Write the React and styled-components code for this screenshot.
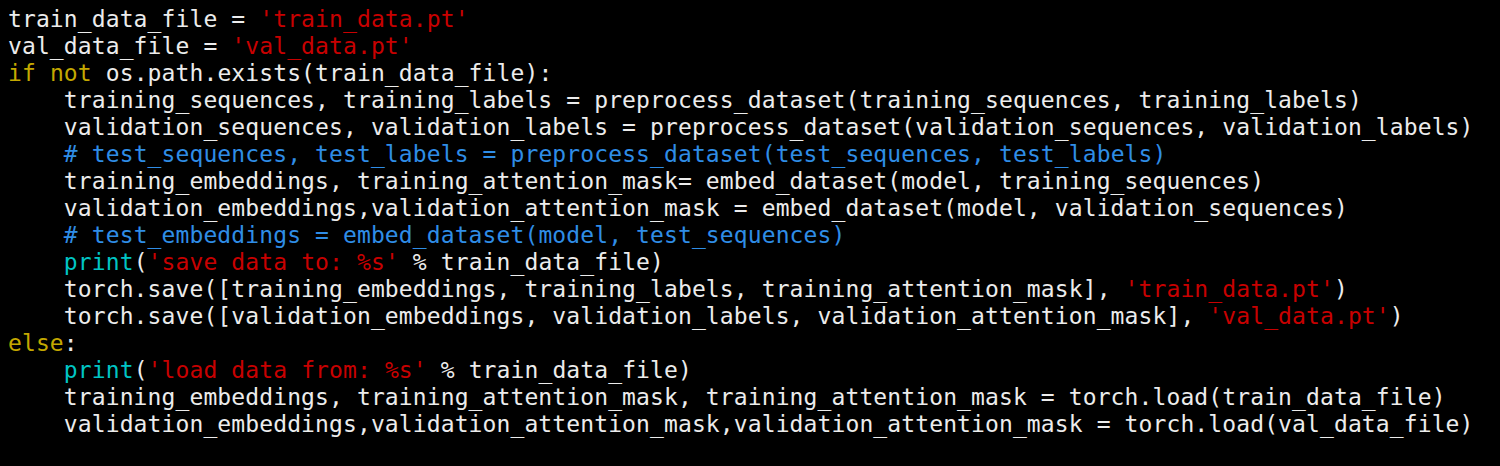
import styled, { createGlobalStyle } from "styled-components";

const GlobalStyle = createGlobalStyle`
  html, body {
    margin: 0;
    padding: 0;
    background: #000;
  }
`;

const Terminal = styled.pre`
  margin: 0;
  padding: 6px 8px;
  height: 466px;
  box-sizing: border-box;
  background: #000;
  color: #ececec;
  font-family: "DejaVu Sans Mono", "Liberation Mono", monospace;
  font-size: 23px;
  letter-spacing: 0.11px;
  line-height: 27px;
  white-space: pre;
  overflow: hidden;
`;

const Line = styled.div`
  height: 27px;
`;

const colors = {
  str: "#c80000",
  kw: "#c4a800",
  fn: "#00c4c4",
  cm: "#2f8de6",
};

const Tok = styled.span`
  color: ${(p) => colors[p.$k] || "inherit"};
`;

const I = "    ";

const lines = [
  [["", "train_data_file = "], ["str", "'train_data.pt'"]],
  [["", "val_data_file = "], ["str", "'val_data.pt'"]],
  [["kw", "if"], ["", " "], ["kw", "not"], ["", " os.path.exists(train_data_file):"]],
  [["", I + "training_sequences, training_labels = preprocess_dataset(training_sequences, training_labels)"]],
  [["", I + "validation_sequences, validation_labels = preprocess_dataset(validation_sequences, validation_labels)"]],
  [["", I], ["cm", "# test_sequences, test_labels = preprocess_dataset(test_sequences, test_labels)"]],
  [["", I + "training_embeddings, training_attention_mask= embed_dataset(model, training_sequences)"]],
  [["", I + "validation_embeddings,validation_attention_mask = embed_dataset(model, validation_sequences)"]],
  [["", I], ["cm", "# test_embeddings = embed_dataset(model, test_sequences)"]],
  [["", I], ["fn", "print"], ["", "("], ["str", "'save data to: %s'"], ["", " % train_data_file)"]],
  [["", I + "torch.save([training_embeddings, training_labels, training_attention_mask], "], ["str", "'train_data.pt'"], ["", ")"]],
  [["", I + "torch.save([validation_embeddings, validation_labels, validation_attention_mask], "], ["str", "'val_data.pt'"], ["", ")"]],
  [["kw", "else"], ["", ":"]],
  [["", I], ["fn", "print"], ["", "("], ["str", "'load data from: %s'"], ["", " % train_data_file)"]],
  [["", I + "training_embeddings, training_attention_mask, training_attention_mask = torch.load(train_data_file)"]],
  [["", I + "validation_embeddings,validation_attention_mask,validation_attention_mask = torch.load(val_data_file)"]],
];

export default function App() {
  return (
    <>
      <GlobalStyle />
      <Terminal>
        {lines.map((line, i) => (
          <Line key={i}>
            {line.map(([k, t], j) => (
              <Tok key={j} $k={k}>
                {t}
              </Tok>
            ))}
          </Line>
        ))}
      </Terminal>
    </>
  );
}
